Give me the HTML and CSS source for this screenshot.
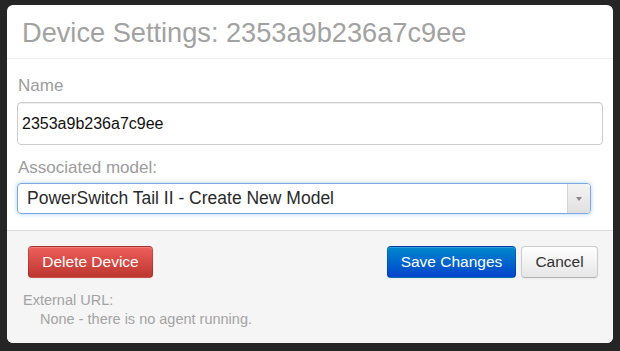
FILE: index.html
```html
<!DOCTYPE html>
<html lang="en">
<head>
    <meta charset="UTF-8">
    <title>Device Settings</title>
    <link rel="stylesheet" href="styles.css">
</head>
<body>
    <div class="modal">
        <div class="modal-header">
            <h3>Device Settings: 2353a9b236a7c9ee</h3>
        </div>
        <div class="modal-body">
            <label class="field-label">Name</label>
            <div class="text-input">2353a9b236a7c9ee</div>
            <label class="field-label">Associated model:</label>
            <div class="select-box">
                <span class="select-value">PowerSwitch Tail II - Create New Model</span>
                <span class="select-arrow"><span class="caret"></span></span>
            </div>
        </div>
        <div class="modal-footer">
            <div class="footer-buttons">
                <button class="btn btn-danger">Delete Device</button>
                <div class="right-buttons">
                    <button class="btn btn-primary">Save Changes</button>
                    <button class="btn btn-default">Cancel</button>
                </div>
            </div>
            <div class="external-url">
                <div>External URL:</div>
                <div class="url-value">None - there is no agent running.</div>
            </div>
        </div>
    </div>
</body>
</html>
```

FILE: styles.css
```css
body { margin: 0; background: #252525; font-family: "Liberation Sans", Arial, sans-serif; padding: 5px 7px 8px 7px; }
.modal { width: 606px; height: 338px; background: #fff; border-radius: 6px; overflow: hidden; display: flex; flex-direction: column; box-sizing: border-box; }
.modal-header { height: 53px; border-bottom: 1px solid #eee; padding: 0 15px; display: flex; align-items: center; }
.modal-header h3 { margin: 0; font-size: 27.2px; font-weight: normal; color: #a2a2a2; padding-top: 2px; }
.modal-body { padding: 17px 10px 16px 10px; display: flex; flex-direction: column; }
.field-label { font-size: 17px; color: #9c9c9c; line-height: 20px; margin-bottom: 6px; padding-left: 1px; }
.text-input { height: 43px; box-sizing: border-box; border: 1px solid #ccc; border-radius: 4px; box-shadow: inset 0 1px 1px rgba(0,0,0,.075); padding: 0 4px; display: flex; align-items: center; font-size: 16px; color: #111; margin-bottom: 13px; }
.field-label + .select-box { margin-top: -1px; }
.select-box { width: 574px; height: 31px; box-sizing: border-box; border: 1px solid #7ea6e0; border-radius: 4px; box-shadow: 0 0 4px rgba(82,168,236,.5); display: flex; align-items: stretch; }
.select-value { flex: 1; display: flex; align-items: center; padding-left: 9px; font-size: 17.5px; color: #2a2a2a; }
.select-arrow { width: 22px; border-left: 1px solid #d5d5d5; background: linear-gradient(#f4f4f4, #e0e0e0); border-radius: 0 3px 3px 0; display: flex; align-items: center; justify-content: center; }
.caret { width: 0; height: 0; border-left: 3px solid transparent; border-right: 3px solid transparent; border-top: 4px solid #888; }
.modal-footer { flex: 1; background: #f5f5f5; border-top: 1px solid #ddd; padding: 15px 15px 0 16px; }
.footer-buttons { display: flex; justify-content: space-between; align-items: center; padding-left: 5px; }
.right-buttons { display: flex; gap: 5px; }
.btn { height: 32px; font-family: "Liberation Sans", Arial, sans-serif; font-size: 15.5px; padding: 0 10px; border-radius: 4px; border: 1px solid rgba(0,0,0,.15); box-shadow: inset 0 1px 0 rgba(255,255,255,.2), 0 1px 2px rgba(0,0,0,.05); cursor: pointer; }
.btn-danger { background: linear-gradient(#ee5f5b, #bd362f); color: #fff; width: 125px; }
.btn-primary { background: linear-gradient(#0088cc, #0044cc); color: #fff; width: 129px; }
.btn-default { background: linear-gradient(#fff, #e6e6e6); color: #333; border-color: #ccc #ccc #b3b3b3; width: 77px; }
.external-url { margin-top: 13px; font-size: 14.5px; color: #a3a3a3; line-height: 19px; }
.url-value { padding-left: 17px; }
```
